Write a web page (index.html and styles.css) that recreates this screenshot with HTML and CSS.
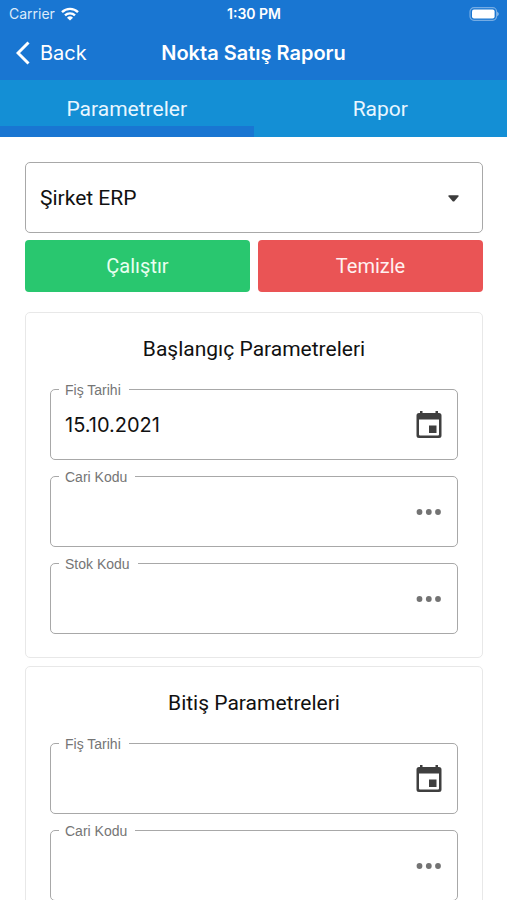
FILE: index.html
```html
<!DOCTYPE html>
<html lang="tr">

<head>
    <meta charset="UTF-8">
    <meta name="viewport" content="width=device-width, initial-scale=1.0">
    <title>Nokta Satış Raporu</title>
    <link rel="stylesheet" href="styles.css">
</head>

<body>
    <div class="app">
        <header class="header">
            <div class="status-bar">
                <div class="carrier">
                    <span>Carrier</span>
                    <svg width="18" height="14" viewBox="0 0 18 14" fill="none" stroke="#fff" stroke-width="2.4">
                        <path d="M1 5.2a11.4 11.4 0 0 1 16 0" />
                        <path d="M4 8.4a7.2 7.2 0 0 1 10 0" />
                        <path d="M9 13.6L6 10.7a4.4 4.4 0 0 1 6 0z" fill="#fff" stroke="none" />
                    </svg>
                </div>
                <span class="time">1:30 PM</span>
                <svg class="battery" width="31" height="14" viewBox="0 0 31 14">
                    <rect x="2" y="0.7" width="26.6" height="12.6" rx="4" fill="none" stroke="#fff" stroke-opacity="0.4" stroke-width="1.2" />
                    <rect x="4" y="2.5" width="22.6" height="9" rx="2" fill="#fff" />
                    <path d="M29.2 4.8q1.600.8 1.600 2.2t-1.600 2.2z" fill="#fff" fill-opacity="0.5" />
                </svg>
            </div>
            <div class="nav-bar">
                <button class="back">
                    <svg width="14" height="24" viewBox="0 0 14 24" fill="none" stroke="#fff" stroke-width="3">
                        <path d="M12.5 1.5L2 12l10.5 10.5" />
                    </svg>
                    Back
                </button>
                <h1>Nokta Satış Raporu</h1>
            </div>
        </header>

        <nav class="tabs">
            <button class="tab active">Parametreler</button>
            <button class="tab">Rapor</button>
        </nav>

        <main class="content">
            <div class="select-box">
                <select aria-label="Şirket">
                    <option>Şirket ERP</option>
                </select>
                <svg class="arrow" width="11" height="7" viewBox="0 0 10 6">
                    <path d="M1 0h8q1.400 0 .5 1.200L6 5.300q-1 1-2 0L.5 1.200Q-.4 0 1 0z" fill="#3c3c3c" />
                </svg>
            </div>

            <div class="actions">
                <button class="bg-green">Çalıştır</button>
                <button class="bg-red">Temizle</button>
            </div>

            <section class="card">
                <h2>Başlangıç Parametreleri</h2>
                <div class="field">
                    <label for="fis-bas">Fiş Tarihi</label>
                    <input type="text" id="fis-bas" value="15.10.2021">
                    <button class="icon" aria-label="Takvim">
                        <svg width="26" height="28" viewBox="0 0 26 28">
                            <path fill="#3f3f3f" fill-rule="evenodd" d="M4 0h2.500v2h13V0H22v2h1q2.500 0 2.500 2.500v20q0 2.500-2.500 2.500H3Q.5 27 .5 24.500v-20Q.5 2 3 2h1zM3 8.500v15q0 1 1 1h18q1 0 1-1v-15zM13 14.500h7.500V22H13z" />
                        </svg>
                    </button>
                </div>
                <div class="field">
                    <label for="cari-bas">Cari Kodu</label>
                    <input type="text" id="cari-bas">
                    <button class="icon" aria-label="Cari seç">
                        <svg width="26" height="8" viewBox="0 0 26 8" fill="#737373">
                            <circle cx="3.500" cy="4" r="2.900" />
                            <circle cx="12.800" cy="4" r="2.900" />
                            <circle cx="22" cy="4" r="2.900" />
                        </svg>
                    </button>
                </div>
                <div class="field">
                    <label for="stok-bas">Stok Kodu</label>
                    <input type="text" id="stok-bas">
                    <button class="icon" aria-label="Stok seç">
                        <svg width="26" height="8" viewBox="0 0 26 8" fill="#737373">
                            <circle cx="3.500" cy="4" r="2.900" />
                            <circle cx="12.800" cy="4" r="2.900" />
                            <circle cx="22" cy="4" r="2.900" />
                        </svg>
                    </button>
                </div>
            </section>

            <section class="card">
                <h2>Bitiş Parametreleri</h2>
                <div class="field">
                    <label for="fis-bit">Fiş Tarihi</label>
                    <input type="text" id="fis-bit">
                    <button class="icon" aria-label="Takvim">
                        <svg width="26" height="28" viewBox="0 0 26 28">
                            <path fill="#3f3f3f" fill-rule="evenodd" d="M4 0h2.500v2h13V0H22v2h1q2.500 0 2.500 2.500v20q0 2.500-2.500 2.500H3Q.5 27 .5 24.500v-20Q.5 2 3 2h1zM3 8.500v15q0 1 1 1h18q1 0 1-1v-15zM13 14.500h7.500V22H13z" />
                        </svg>
                    </button>
                </div>
                <div class="field">
                    <label for="cari-bit">Cari Kodu</label>
                    <input type="text" id="cari-bit">
                    <button class="icon" aria-label="Cari seç">
                        <svg width="26" height="8" viewBox="0 0 26 8" fill="#737373">
                            <circle cx="3.500" cy="4" r="2.900" />
                            <circle cx="12.800" cy="4" r="2.900" />
                            <circle cx="22" cy="4" r="2.900" />
                        </svg>
                    </button>
                </div>
            </section>
        </main>
    </div>
</body>

</html>
```
FILE: styles.css
```css
* {
    box-sizing: border-box;
}

body {
    margin: 0;
    background-color: #ffffff;
    color: #111111;
    font-family: Inter, Roboto, sans-serif;
}

button,
input,
select {
    margin: 0;
    padding: 0;
    border: none;
    background: none;
    color: inherit;
    font-family: inherit;
    font-size: 20px;
}

button {
    cursor: pointer;
}

svg {
    display: block;
}

.app {
    display: flex;
    flex-direction: column;
    height: 100vh;
    overflow: hidden;
}

.header {
    background-color: #1976d2;
    color: #ffffff;
}

.status-bar,
.nav-bar {
    display: grid;
    grid-template-columns: 1fr auto 1fr;
    align-items: center;
}

.status-bar {
    height: 27px;
    padding: 0 8px 0 9px;
    font-size: 14px;
}

.carrier {
    display: flex;
    align-items: center;
    gap: 6px;
    color: #dcebfa;
}

.time {
    font-weight: 600;
}

.battery {
    justify-self: end;
}

.nav-bar {
    height: 51px;
    margin-bottom: 2px;
    padding: 0 16px;
}

.nav-bar h1 {
    margin: 0;
    font-size: 20px;
    font-weight: 600;
}

.back {
    display: flex;
    align-items: center;
    justify-self: start;
    gap: 10px;
}

.tabs {
    display: flex;
    flex-shrink: 0;
    height: 57px;
    background-color: #148fd5;
}

.tab {
    flex: 1;
    border-top: 11px solid transparent;
    border-bottom: 11px solid transparent;
    color: #e8f6ff;
    font-family: Roboto, sans-serif;
    font-size: 21px;
}

.tab.active {
    border-bottom-color: #1976d2;
}

.content {
    flex: 1;
    min-height: 0;
    overflow: hidden;
    padding: 25px 24px 0 25px;
}

.select-box {
    position: relative;
}

.select-box select {
    appearance: none;
    width: 100%;
    height: 71px;
    padding: 0 14px;
    border: 1px solid #a8a8a8;
    border-radius: 5px;
    font-family: Roboto, sans-serif;
    font-size: 21px;
}

.arrow {
    position: absolute;
    top: 33px;
    right: 24px;
    pointer-events: none;
}

.actions {
    display: flex;
    gap: 8px;
    margin: 7px 0 20px;
}

.actions button {
    flex: 1;
    height: 52px;
    border-radius: 4px;
    color: #fff0f0;
    font-family: Roboto, sans-serif;
}

.actions .bg-green {
    background-color: #29c76f;
    color: #e8fff0;
}

.actions .bg-red {
    background-color: #ea5455;
}

.card {
    display: flex;
    flex-direction: column;
    gap: 16px;
    margin-bottom: 8px;
    padding: 24px 24px 23px;
    border: 1px solid #e8e8e8;
    border-radius: 5px;
}

.card h2 {
    margin: 0 0 12px;
    font-family: Roboto, sans-serif;
    font-size: 21px;
    font-weight: 400;
    line-height: 24px;
    text-align: center;
}

.field {
    position: relative;
    display: flex;
    align-items: center;
    height: 71px;
    border: 1px solid #a8a8a8;
    border-radius: 5px;
}

.field label {
    position: absolute;
    top: -8px;
    left: 8px;
    padding: 0 8px 0 6px;
    background-color: #ffffff;
    color: #757575;
    font-family: "Liberation Sans", Arial, sans-serif;
    font-size: 14px;
    line-height: 16px;
}

.field input {
    flex: 1;
    min-width: 0;
    height: 100%;
    padding: 0 14px;
    outline: none;
}

.icon {
    margin-right: 15px;
}
```
